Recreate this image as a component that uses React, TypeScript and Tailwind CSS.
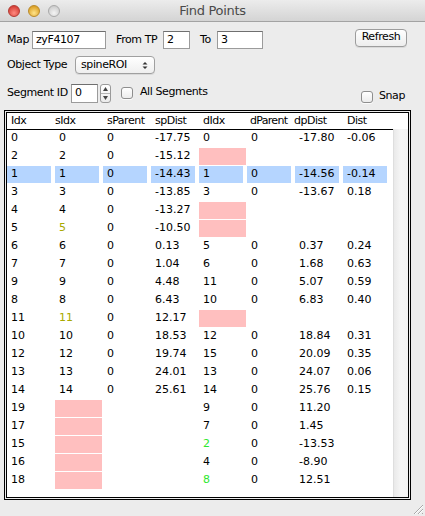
import React from 'react';

type Cell = string | null | { t: string; c: string };

const OLIVE = '#a9a900';
const GREEN = '#2ee82e';

// null = empty pink cell, '' = blank
const rows: Cell[][] = [
  ['0', '0', '0', '-17.75', '0', '0', '-17.80', '-0.06'],
  ['2', '2', '0', '-15.12', null, '', '', ''],
  ['1', '1', '0', '-14.43', '1', '0', '-14.56', '-0.14'],
  ['3', '3', '0', '-13.85', '3', '0', '-13.67', '0.18'],
  ['4', '4', '0', '-13.27', null, '', '', ''],
  ['5', { t: '5', c: OLIVE }, '0', '-10.50', null, '', '', ''],
  ['6', '6', '0', '0.13', '5', '0', '0.37', '0.24'],
  ['7', '7', '0', '1.04', '6', '0', '1.68', '0.63'],
  ['9', '9', '0', '4.48', '11', '0', '5.07', '0.59'],
  ['8', '8', '0', '6.43', '10', '0', '6.83', '0.40'],
  ['11', { t: '11', c: OLIVE }, '0', '12.17', null, '', '', ''],
  ['10', '10', '0', '18.53', '12', '0', '18.84', '0.31'],
  ['12', '12', '0', '19.74', '15', '0', '20.09', '0.35'],
  ['13', '13', '0', '24.01', '13', '0', '24.07', '0.06'],
  ['14', '14', '0', '25.61', '14', '0', '25.76', '0.15'],
  ['19', null, '', '', '9', '0', '11.20', ''],
  ['17', null, '', '', '7', '0', '1.45', ''],
  ['15', null, '', '', { t: '2', c: GREEN }, '0', '-13.53', ''],
  ['16', null, '', '', '4', '0', '-8.90', ''],
  ['18', null, '', '', { t: '8', c: GREEN }, '0', '12.51', ''],
];

const SELECTED = 2;

const headers = [
  { label: 'Idx', cls: 'pl-[4px]' },
  { label: 'sIdx', cls: 'pl-0' },
  { label: 'sParent', cls: 'pl-[4px]' },
  { label: 'spDist', cls: 'pl-[4px]' },
  { label: 'dIdx', cls: 'pl-[4px]' },
  { label: 'dParent', cls: 'pl-[3px] tracking-[-0.7px]' },
  { label: 'dpDist', cls: '-ml-[1px]' },
  { label: 'Dist', cls: 'pl-[4px]' },
];

function Light({ from, to, edge }: { from: string; to: string; edge: string }) {
  return (
    <div
      className="w-[12px] h-[12px] rounded-full border"
      style={{ background: `radial-gradient(circle at 50% 70%, ${from} 0%, ${to} 85%)`, borderColor: edge }}
    />
  );
}

function TextBox({ w, value }: { w: string; value: string }) {
  return (
    <div className={`${w} h-[18px] bg-white border border-[#9b9b9b] border-t-[#6f6f6f] flex items-center pl-[3px] text-black`}>
      {value}
    </div>
  );
}

function CheckBox() {
  return (
    <div className="w-[12px] h-[12px] rounded-[3px] border border-[#8e8e8e] bg-gradient-to-b from-white to-[#ececec] shadow-[0_1px_0_rgba(255,255,255,0.8)]" />
  );
}

function TableCell({ cell, selected }: { cell: Cell; selected: boolean }) {
  if (cell === null) {
    return (
      <div className="w-[48px] h-[18px] pb-[1px]">
        <div className="h-full mr-[1px] bg-[#ffbfbf]" />
      </div>
    );
  }
  const text = typeof cell === 'string' ? cell : cell.t;
  const color = typeof cell === 'string' ? undefined : cell.c;
  return (
    <div className="w-[48px] h-[18px] pb-[1px]">
      <div className={`h-full mr-[4px] pl-[4px] flex items-center whitespace-nowrap ${selected ? 'bg-[#b5d5ff]' : ''}`} style={color ? { color } : undefined}>
        {text}
      </div>
    </div>
  );
}

export default function App() {
  return (
    <div className="w-[425px] h-[516px] bg-[#ececec] flex flex-col overflow-hidden text-[11px] text-black" style={{ fontFamily: '"DejaVu Sans", "Liberation Sans", sans-serif' }}>
      {/* Title bar */}
      <div className="h-[22px] shrink-0 bg-gradient-to-b from-[#ececec] to-[#d4d4d4] border-b border-[#a3a3a3] relative flex items-center">
        <div className="flex items-center gap-[8px] pl-[8px]">
          <Light from="#ff8a80" to="#d1382f" edge="#b23a33" />
          <Light from="#ffe48a" to="#d89a1c" edge="#b98a2a" />
          <Light from="#f4f4f4" to="#c9c9c9" edge="#a9a9a9" />
        </div>
        <div className="absolute inset-0 flex items-center justify-center text-[13px] tracking-[-0.3px] text-[#4a4a4a] pt-[1px]">Find Points</div>
      </div>

      {/* Row 1 */}
      <div className="flex items-center h-[18px] mt-[9px] pl-[7px] tracking-[-0.4px] whitespace-nowrap">
        <span className="w-[25px]">Map</span>
        <TextBox w="w-[74px]" value="zyF4107" />
        <span className="ml-[10px] w-[47px]">From TP</span>
        <TextBox w="w-[27px]" value="2" />
        <span className="ml-[10px] w-[17px]">To</span>
        <TextBox w="w-[46px]" value="3" />
        <button className="ml-auto mr-[18px] -mt-[5px] w-[52px] h-[18px] rounded-[4px] border border-[#9c9c9c] bg-gradient-to-b from-white to-[#ededed] flex items-center justify-center shadow-[0_1px_0_rgba(0,0,0,0.08)]">
          Refresh
        </button>
      </div>

      {/* Row 2 */}
      <div className="flex items-center h-[18px] mt-[7px] pl-[7px] tracking-[-0.4px] whitespace-nowrap">
        <span className="w-[68px]">Object Type</span>
        <div className="w-[80px] h-[18px] rounded-[4px] border border-[#a0a0a0] bg-gradient-to-b from-white to-[#efefef] flex items-center pl-[5px] pr-[6px] shadow-[0_1px_0_rgba(0,0,0,0.08)]">
          <span className="flex-1">spineROI</span>
          <svg width="6" height="9" viewBox="0 0 6 9">
            <path d="M0.5 3.5 L3 1 L5.5 3.5 Z" fill="#333" />
            <path d="M0.5 5.5 L3 8 L5.5 5.5 Z" fill="#333" />
          </svg>
        </div>
      </div>

      {/* Row 3 */}
      <div className="flex items-center h-[19px] mt-[10px] pl-[7px] tracking-[-0.4px] whitespace-nowrap">
        <span className="w-[64px]">Segment ID</span>
        <div className="w-[27px] h-[19px] bg-white border border-[#9b9b9b] border-t-[#6f6f6f] flex items-center pl-[3px]">0</div>
        <div className="ml-[2px] w-[11px] h-[19px] rounded-[3px] border border-[#9a9a9a] bg-gradient-to-b from-white to-[#ebebeb] flex flex-col">
          <div className="flex-1 flex items-center justify-center border-b border-[#b5b5b5]">
            <svg width="5" height="4" viewBox="0 0 5 4"><path d="M0 4 L2.5 0 L5 4 Z" fill="#444" /></svg>
          </div>
          <div className="flex-1 flex items-center justify-center">
            <svg width="5" height="4" viewBox="0 0 5 4"><path d="M0 0 L2.5 4 L5 0 Z" fill="#444" /></svg>
          </div>
        </div>
        <div className="ml-[10px] -mt-[2px]">
          <CheckBox />
        </div>
        <span className="ml-[7px] -mt-[2px]">All Segments</span>
        <div className="ml-auto mr-[20px] mt-[6px] flex items-center">
          <CheckBox />
          <span className="ml-[6px]">Snap</span>
        </div>
      </div>

      {/* Table */}
      <div className="ml-[4px] mt-[7px] w-[407px] h-[390px] border border-black p-[1px] bg-[#ececec]">
        <div className="h-full border border-black bg-white flex flex-col">
          <div className="h-[16px] shrink-0 flex items-center tracking-[-0.5px]">
            {headers.map((h) => (
              <div key={h.label} className="w-[48px] whitespace-nowrap">
                <div className={h.cls}>{h.label}</div>
              </div>
            ))}
          </div>
          <div className="flex-1 flex min-h-0">
            <div className="w-[386px] border-t border-black">
              {rows.map((r, i) => (
                <div key={i} className="flex">
                  {r.map((c, j) => (
                    <TableCell key={j} cell={c} selected={i === SELECTED} />
                  ))}
                </div>
              ))}
            </div>
            <div className="w-[15px] bg-gradient-to-r from-[#e9e9e9] via-[#f6f6f6] to-[#f3f3f3] border-l border-[#dedede]" />
          </div>
        </div>
      </div>

      {/* Resize grip */}
      <div className="flex-1 flex justify-end items-end">
        <svg width="12" height="12" viewBox="0 0 12 12" className="mr-[1px] mb-[1px]">
          <path d="M11 2 L2 11 M11 6 L6 11 M11 10 L10 11" stroke="#a8a8a8" strokeWidth="1" />
          <path d="M11 3 L3 11 M11 7 L7 11" stroke="#ffffff" strokeWidth="1" />
        </svg>
      </div>
    </div>
  );
}
